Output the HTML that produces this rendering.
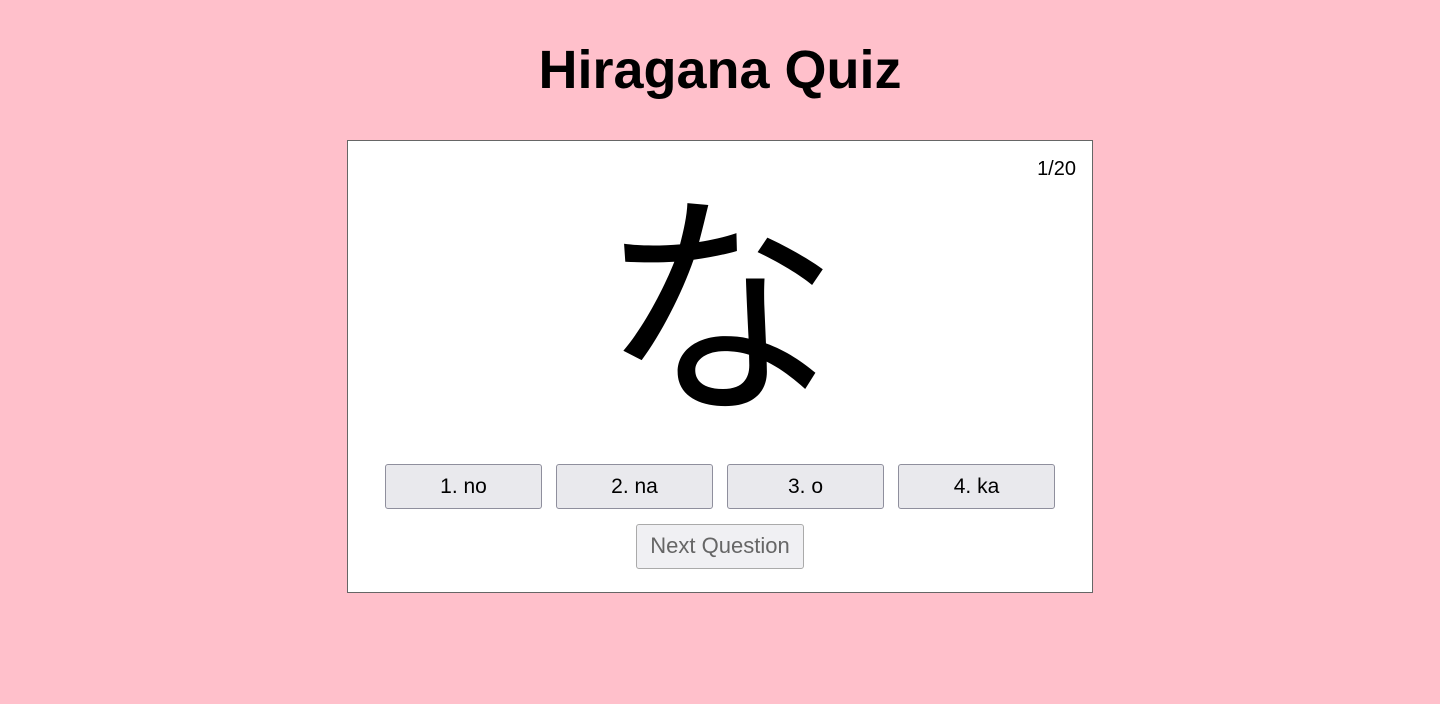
<!DOCTYPE html>
<html><head><style>
body{margin:0;background:#ffc0cb;width:1440px;height:704px;position:relative;font-family:"Liberation Sans","Noto Sans CJK JP",sans-serif;overflow:hidden}
h1{position:absolute;top:40px;left:0;width:1440px;text-align:center;margin:0;font-size:54px;font-weight:bold;line-height:60px}
.card{position:absolute;left:347px;top:140px;width:744px;height:451px;background:#fff;border:1px solid #666}
.cnt{position:absolute;right:16px;top:17px;font-size:20px}
.kana{position:absolute;left:0;width:744px;top:0px;text-align:center;font-family:"Noto Sans CJK JP",sans-serif;font-size:238px;line-height:300px}
.b{position:absolute;top:323px;width:155px;height:43px;background:#e9e9ed;border:1px solid #8f8f9d;border-radius:3px;font-size:21px;text-align:center;line-height:43px;color:#000}
.n{position:absolute;left:288px;top:383px;width:166px;height:43px;background:#f0f0f3;border:1px solid #aaa;border-radius:3px;font-size:22px;text-align:center;line-height:41px;color:#666}
</style></head><body>
<h1>Hiragana Quiz</h1>
<div class="card">
<div class="cnt">1/20</div>
<div class="kana">な</div>
<div class="b" style="left:37px">1. no</div>
<div class="b" style="left:208px">2. na</div>
<div class="b" style="left:379px">3. o</div>
<div class="b" style="left:550px">4. ka</div>
<div class="n">Next Question</div>
</div>
</body></html>
